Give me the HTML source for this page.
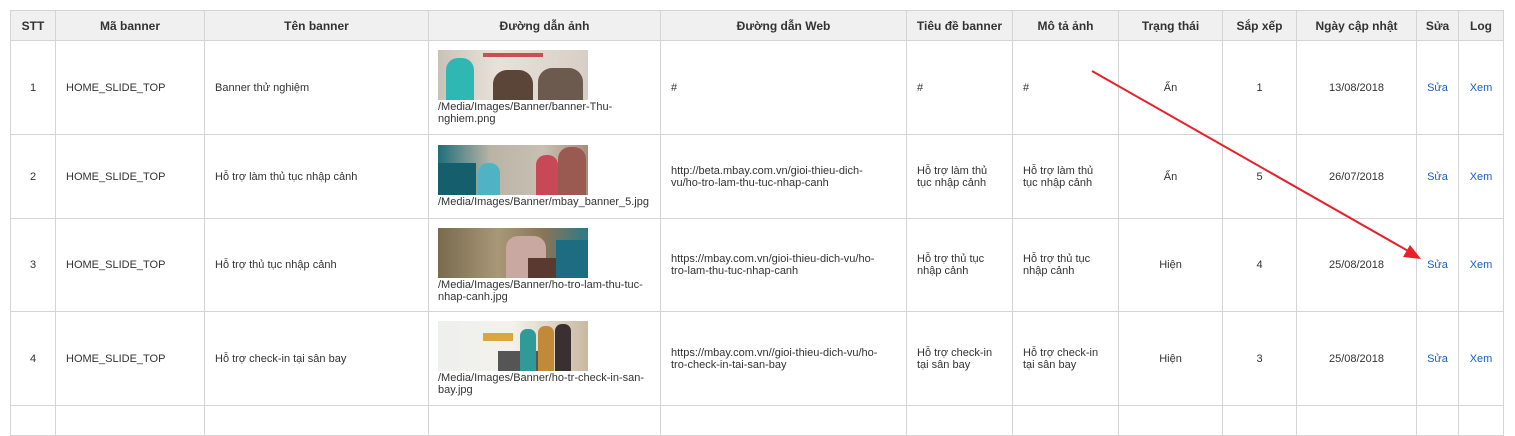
<!DOCTYPE html>
<html><head><meta charset="utf-8"><style>
body{margin:0;background:#fff;width:1515px;height:414px;overflow:hidden;position:relative;font-family:"Liberation Sans",Tahoma,sans-serif;font-size:11px;color:#333}
table{position:absolute;left:10px;top:10px;border-collapse:collapse;table-layout:fixed;width:1494px}
td,th{border:1px solid #d4d4d4;padding:0 10px;white-space:nowrap;vertical-align:middle;line-height:12px;overflow:hidden}
th{background:#f0f0f0;height:29px;font-size:12px;font-weight:bold;color:#333;text-align:center;padding:0}
.c{text-align:center}
a{color:#1a5fc2;text-decoration:none}
.img{width:150px;height:50px;margin-bottom:1px;position:relative;overflow:hidden}
.img div{position:absolute}
</style></head><body>
<table>
<colgroup><col style="width:45px"><col style="width:149px"><col style="width:224px"><col style="width:232px"><col style="width:246px"><col style="width:106px"><col style="width:106px"><col style="width:104px"><col style="width:74px"><col style="width:120px"><col style="width:42px"><col style="width:45px"></colgroup>
<tr><th>STT</th><th>Mã banner</th><th>Tên banner</th><th>Đường dẫn ảnh</th><th>Đường dẫn Web</th><th>Tiêu đề banner</th><th>Mô tả ảnh</th><th>Trạng thái</th><th>Sắp xếp</th><th>Ngày cập nhật</th><th>Sửa</th><th>Log</th></tr>
<tr style="height:94px"><td class="c">1</td><td>HOME_SLIDE_TOP</td><td>Banner thử nghiệm</td>
<td style="padding-left:9px"><div class="img" style="background:linear-gradient(90deg,#c9c2b8,#e8e2da 40%,#d7cfc6)"><div style="left:8px;top:8px;width:28px;height:42px;background:#2fb8b3;border-radius:12px 12px 0 0"></div><div style="left:55px;top:20px;width:40px;height:30px;background:#5a4538;border-radius:14px 14px 0 0"></div><div style="left:100px;top:18px;width:45px;height:32px;background:#6d5a4e;border-radius:14px 14px 0 0"></div><div style="left:45px;top:3px;width:60px;height:4px;background:#c85050"></div></div>/Media/Images/Banner/banner-Thu-<br>nghiem.png</td>
<td>#</td><td>#</td><td>#</td><td class="c">Ẩn</td><td class="c">1</td><td class="c">13/08/2018</td><td class="c"><a>Sửa</a></td><td class="c"><a>Xem</a></td></tr>
<tr style="height:84px"><td class="c">2</td><td>HOME_SLIDE_TOP</td><td>Hỗ trợ làm thủ tục nhập cảnh</td>
<td style="padding-left:9px"><div class="img" style="background:linear-gradient(90deg,#1f6f7a,#b9b3a6 35%,#c8c0b2 70%,#a88c7a)"><div style="left:0;top:18px;width:38px;height:32px;background:#155e6b"></div><div style="left:40px;top:18px;width:22px;height:32px;background:#4fb3c4;border-radius:10px 10px 0 0"></div><div style="left:98px;top:10px;width:22px;height:40px;background:#c84858;border-radius:10px 10px 0 0"></div><div style="left:120px;top:2px;width:28px;height:48px;background:#9a5a52;border-radius:12px 12px 0 0"></div></div>/Media/Images/Banner/mbay_banner_5.jpg</td>
<td>http://beta.mbay.com.vn/gioi-thieu-dich-<br>vu/ho-tro-lam-thu-tuc-nhap-canh</td><td>Hỗ trợ làm thủ<br>tục nhập cảnh</td><td>Hỗ trợ làm thủ<br>tục nhập cảnh</td><td class="c">Ẩn</td><td class="c">5</td><td class="c">26/07/2018</td><td class="c"><a>Sửa</a></td><td class="c"><a>Xem</a></td></tr>
<tr style="height:93px"><td class="c">3</td><td>HOME_SLIDE_TOP</td><td>Hỗ trợ thủ tục nhập cảnh</td>
<td style="padding-left:9px"><div class="img" style="background:linear-gradient(90deg,#7a6a4e,#a89878 40%,#8a7556 70%,#2a7a88)"><div style="left:68px;top:8px;width:40px;height:42px;background:#c8a8a0;border-radius:12px 12px 0 0"></div><div style="left:90px;top:30px;width:28px;height:20px;background:#5a3a30"></div><div style="left:118px;top:12px;width:32px;height:38px;background:#1e6c82"></div></div>/Media/Images/Banner/ho-tro-lam-thu-tuc-<br>nhap-canh.jpg</td>
<td>https://mbay.com.vn/gioi-thieu-dich-vu/ho-<br>tro-lam-thu-tuc-nhap-canh</td><td>Hỗ trợ thủ tục<br>nhập cảnh</td><td>Hỗ trợ thủ tục<br>nhập cảnh</td><td class="c">Hiện</td><td class="c">4</td><td class="c">25/08/2018</td><td class="c"><a>Sửa</a></td><td class="c"><a>Xem</a></td></tr>
<tr style="height:94px"><td class="c">4</td><td>HOME_SLIDE_TOP</td><td>Hỗ trợ check-in tại sân bay</td>
<td style="padding-left:9px"><div class="img" style="background:linear-gradient(90deg,#eef0ee,#f3f1ec 50%,#c9b9a0)"><div style="left:45px;top:12px;width:30px;height:8px;background:#d9a640"></div><div style="left:60px;top:30px;width:50px;height:20px;background:#555"></div><div style="left:82px;top:8px;width:16px;height:42px;background:#2f9a98;border-radius:7px 7px 0 0"></div><div style="left:100px;top:5px;width:16px;height:45px;background:#c08a3a;border-radius:7px 7px 0 0"></div><div style="left:117px;top:3px;width:16px;height:47px;background:#3a3030;border-radius:7px 7px 0 0"></div></div>/Media/Images/Banner/ho-tr-check-in-san-<br>bay.jpg</td>
<td>https://mbay.com.vn//gioi-thieu-dich-vu/ho-<br>tro-check-in-tai-san-bay</td><td>Hỗ trợ check-in<br>tại sân bay</td><td>Hỗ trợ check-in<br>tại sân bay</td><td class="c">Hiện</td><td class="c">3</td><td class="c">25/08/2018</td><td class="c"><a>Sửa</a></td><td class="c"><a>Xem</a></td></tr>
<tr style="height:30px"><td></td><td></td><td></td><td></td><td></td><td></td><td></td><td></td><td></td><td></td><td></td><td></td></tr>
</table>
<svg style="position:absolute;left:0;top:0" width="1515" height="414"><line x1="1092" y1="71" x2="1410" y2="252" stroke="#e8202a" stroke-width="2"/><polygon points="1421,259 1403,257 1410,245" fill="#e8202a"/></svg>
</body></html>
